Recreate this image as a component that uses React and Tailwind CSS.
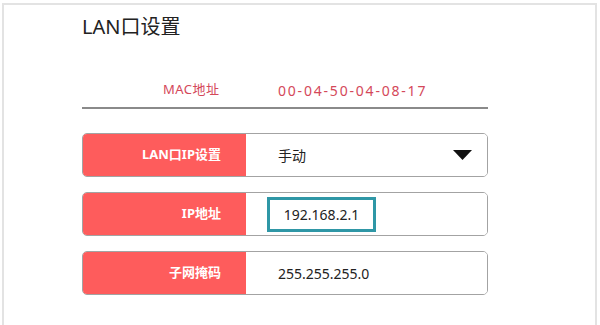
const rows = [
  { label: "LAN口IP设置", value: "手动", kind: "select" },
  { label: "IP地址", value: "192.168.2.1", kind: "focus" },
  { label: "子网掩码", value: "255.255.255.0", kind: "text" },
];

function Row({ label, value, kind }) {
  return (
    <div className="flex h-[44px] w-[406px] rounded-[5px] border border-[#a3a3a3] overflow-hidden">
      <div className="w-[163px] bg-[#fe5c5c] flex items-center justify-end pr-[25px] text-white font-bold text-[13px]">
        {label}
      </div>
      <div className="flex-1 bg-white flex items-center relative text-[14px] text-[#222]">
        {kind === "focus" ? (
          <div className="ml-[21px] w-[109px] h-[35px] border-[3px] border-[#2f97a6] flex items-center justify-center">
            {value}
          </div>
        ) : (
          <span className="ml-[32px]">{value}</span>
        )}
        {kind === "select" && (
          <svg className="absolute right-[15px] top-[16px]" width="19" height="10" viewBox="0 0 19 10">
            <polygon points="0,0 19,0 9.5,10" fill="#111" />
          </svg>
        )}
      </div>
    </div>
  );
}

export default function App() {
  return (
    <div
      className="w-[600px] h-[325px] bg-white overflow-hidden"
      style={{ fontFamily: '"Noto Sans", "Noto Sans CJK SC", sans-serif' }}
    >
      <div className="ml-[2px] mt-[3px] w-[595px] h-[330px] border-2 border-[#e3e3e3] pl-[78px] pt-[9px]">
        <h1 className="text-[20px] leading-[26px] text-[#222]">LAN口设置</h1>

        {/* MAC */}
        <div className="mt-[40px] w-[406px] border-b-2 border-[#8a8a8a] pb-[7px]">
          <div className="flex items-center h-[20px] text-[13px] text-[#d4485a]">
            <span className="ml-[81px] w-[115px] tracking-[0.5px]">MAC地址</span>
            <span className="text-[14px] tracking-[1.8px]">00-04-50-04-08-17</span>
          </div>
        </div>

        <div className="mt-[24px] flex flex-col gap-[15px]">
          {rows.map((r) => (
            <Row key={r.label} {...r} />
          ))}
        </div>
      </div>
    </div>
  );
}
